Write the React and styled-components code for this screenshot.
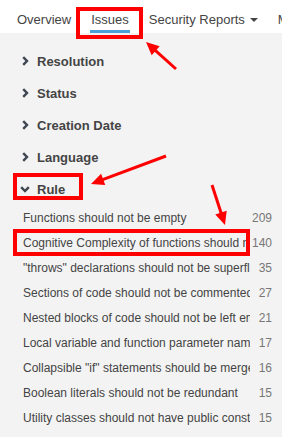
import React from 'react'
import styled, { createGlobalStyle } from 'styled-components'

const GlobalStyle = createGlobalStyle`
  body {
    margin: 0;
    background: #f3f3f3;
    font-family: "Liberation Sans", Arial, sans-serif;
  }
`

const Page = styled.div`
  position: relative;
  width: 282px;
  height: 437px;
  overflow: hidden;
  background: #f3f3f3;
`

const Nav = styled.nav`
  display: flex;
  align-items: stretch;
  height: 33px;
  padding-left: 7px;
  background: #fff;
  white-space: nowrap;
  overflow: hidden;
`

const Tab = styled.div`
  display: flex;
  align-items: flex-end;
  padding: 0 10px;
  font-size: 13px;
  color: #444;
`

const TabLabel = styled.span`
  display: flex;
  align-items: center;
  gap: 5px;
  line-height: 16px;
  padding: 0 1px 2px;
  margin: 0 -1px;
  border-bottom: 3px solid ${p => (p.$active ? '#4b9fd5' : 'transparent')};
`

const Caret = styled.span`
  width: 0;
  height: 0;
  border-left: 4px solid transparent;
  border-right: 4px solid transparent;
  border-top: 4px solid #444;
`

const Facets = styled.div`
  padding-top: 12px;
`

const FacetHeader = styled.div`
  display: flex;
  align-items: center;
  gap: 7px;
  height: 32px;
  padding-left: 20px;
  font-size: 13px;
  font-weight: bold;
  color: #444;
`

const IconBox = styled.span`
  display: flex;
  justify-content: center;
  width: 10px;
`

const FacetItem = styled.div`
  display: flex;
  align-items: center;
  height: 25px;
  padding: 0 10px 0 23px;
  font-size: 12px;
  color: #444;
`

const ItemName = styled.span`
  width: 227px;
  overflow: hidden;
  white-space: nowrap;
`

const ItemCount = styled.span`
  margin-left: auto;
  color: #777;
`

const Highlight = styled.div`
  position: absolute;
  left: ${p => p.$x}px;
  top: ${p => p.$y}px;
  width: ${p => p.$w}px;
  height: ${p => p.$h}px;
  box-sizing: border-box;
  border: 4px solid #f00;
  pointer-events: none;
`

const Overlay = styled.svg`
  position: absolute;
  left: 0;
  top: 0;
  pointer-events: none;
`

const ChevronRight = () => (
  <svg width="7" height="10" viewBox="0 0 7 10">
    <polyline points="1.2,1.2 5,5 1.2,8.8" fill="none" stroke="#3d4650" strokeWidth="2.4" />
  </svg>
)

const ChevronDown = () => (
  <svg width="10" height="7" viewBox="0 0 10 7">
    <polyline points="1.2,1.2 5,5 8.8,1.2" fill="none" stroke="#3d4650" strokeWidth="2.4" />
  </svg>
)

function Arrow({ from, to }) {
  const [tx, ty] = from
  const [px, py] = to
  const len = Math.hypot(px - tx, py - ty)
  const ux = (px - tx) / len
  const uy = (py - ty) / len
  const head = 13
  const half = 6
  const bx = px - ux * head
  const by = py - uy * head
  const pts = [
    [px, py],
    [bx - uy * half, by + ux * half],
    [bx + uy * half, by - ux * half],
  ]
  return (
    <g>
      <line x1={tx} y1={ty} x2={bx + ux * 2} y2={by + uy * 2} stroke="#f00" strokeWidth="3" />
      <polygon points={pts.map(p => p.join(',')).join(' ')} fill="#f00" />
    </g>
  )
}

const tabs = [
  { label: 'Overview' },
  { label: 'Issues', active: true },
  { label: 'Security Reports', menu: true },
  { label: 'More' },
]

const facets = ['Resolution', 'Status', 'Creation Date', 'Language']

const rules = [
  ['Functions should not be empty', 209],
  ['Cognitive Complexity of functions should not be too high', 140],
  ['"throws" declarations should not be superfluous', 35],
  ['Sections of code should not be commented out', 27],
  ['Nested blocks of code should not be left empty', 21],
  ['Local variable and function parameter names should comply', 17],
  ['Collapsible "if" statements should be merged', 16],
  ['Boolean literals should not be redundant', 15],
  ['Utility classes should not have public constructors', 15],
]

export default function App() {
  return (
    <Page>
      <GlobalStyle />
      <Nav>
        {tabs.map(t => (
          <Tab key={t.label}>
            <TabLabel $active={t.active}>
              {t.label}
              {t.menu && <Caret />}
            </TabLabel>
          </Tab>
        ))}
      </Nav>

      <Facets>
        {facets.map(f => (
          <FacetHeader key={f}>
            <IconBox><ChevronRight /></IconBox>
            {f}
          </FacetHeader>
        ))}
        <FacetHeader>
          <IconBox><ChevronDown /></IconBox>
          Rule
        </FacetHeader>
        {rules.map(([name, count]) => (
          <FacetItem key={name}>
            <ItemName>{name}</ItemName>
            <ItemCount>{count}</ItemCount>
          </FacetItem>
        ))}
      </Facets>

      <Highlight $x={76} $y={7} $w={67} $h={32} />
      <Highlight $x={13} $y={173} $w={70} $h={27} />
      <Highlight $x={13} $y={229} $w={237} $h={27} />

      <Overlay width="282" height="437">
        <Arrow from={[176, 69]} to={[146, 42]} />
        <Arrow from={[166, 156]} to={[91, 184]} />
        <Arrow from={[212, 185]} to={[225, 225]} />
      </Overlay>
    </Page>
  )
}
